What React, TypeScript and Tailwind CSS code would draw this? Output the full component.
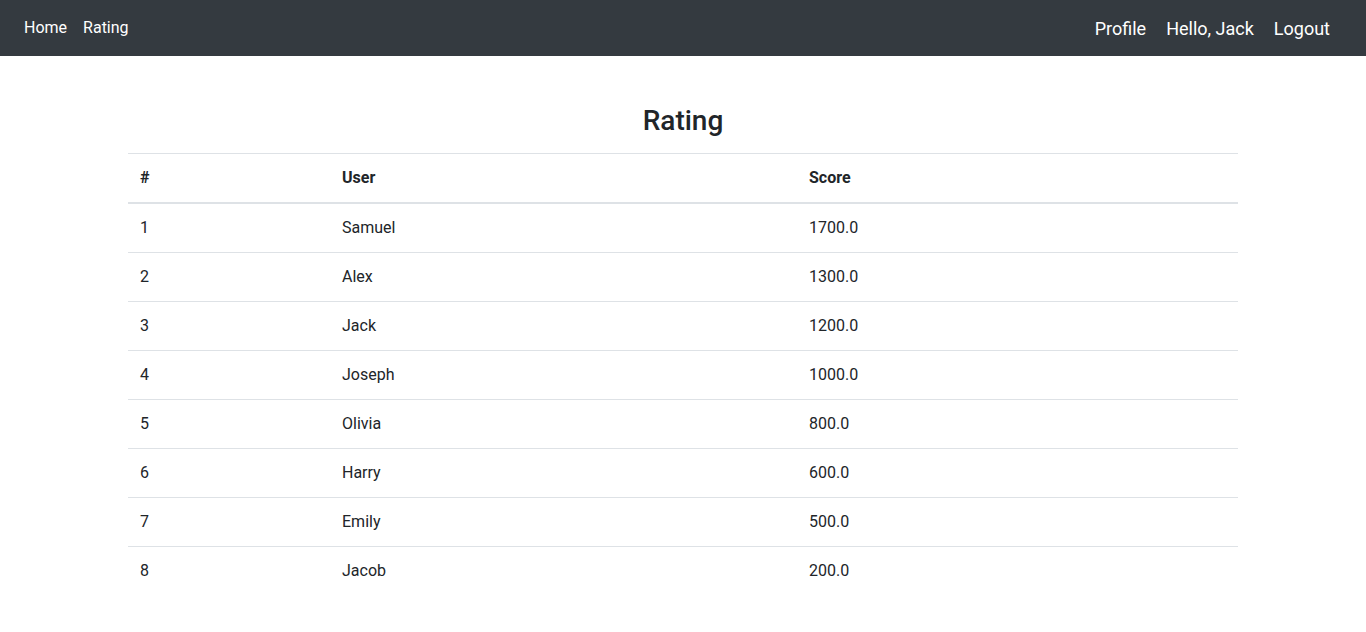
import React from 'react';

const rows = [
  { name: 'Samuel', score: '1700.0' },
  { name: 'Alex',   score: '1300.0' },
  { name: 'Jack',   score: '1200.0' },
  { name: 'Joseph', score: '1000.0' },
  { name: 'Olivia', score: '800.0' },
  { name: 'Harry',  score: '600.0' },
  { name: 'Emily',  score: '500.0' },
  { name: 'Jacob',  score: '200.0' },
];

export default function App() {
  return (
    <div className="min-h-[632px] bg-white font-['Roboto',sans-serif] text-[#212529]">
      {/* Navbar */}
      <nav className="h-14 bg-[#343a40] flex items-center justify-between pl-4 pr-9">
        <div className="flex items-center">
          <a className="px-2 text-base text-white leading-6">Home</a>
          <a className="px-2 text-base text-white leading-6">Rating</a>
        </div>
        <div className="flex items-center gap-5 mt-0.5">
          <a className="text-[18px] text-white leading-6">Profile</a>
          <a className="text-[18px] text-white leading-6">Hello, Jack</a>
          <a className="text-[18px] text-white leading-6">Logout</a>
        </div>
      </nav>

      {/* Content */}
      <main className="w-[1110px] mx-auto">
        <h3 className="mt-[48px] mb-[15px] text-center text-[28px] font-medium leading-[34px]">Rating</h3>
        <table className="w-full border-collapse text-base">
          <thead>
            <tr className="border-t border-[#dee2e6] border-b-2">
              <th className="w-[202px] p-3 text-left font-bold leading-6">#</th>
              <th className="w-[467px] p-3 text-left font-bold leading-6">User</th>
              <th className="p-3 text-left font-bold leading-6">Score</th>
            </tr>
          </thead>
          <tbody>
            {rows.map((r, i) => (
              <tr key={r.name} className={i > 0 ? 'border-t border-[#dee2e6]' : ''}>
                <td className="p-3 leading-6">{i + 1}</td>
                <td className="p-3 leading-6">{r.name}</td>
                <td className="p-3 leading-6">{r.score}</td>
              </tr>
            ))}
          </tbody>
        </table>
      </main>
    </div>
  );
}
